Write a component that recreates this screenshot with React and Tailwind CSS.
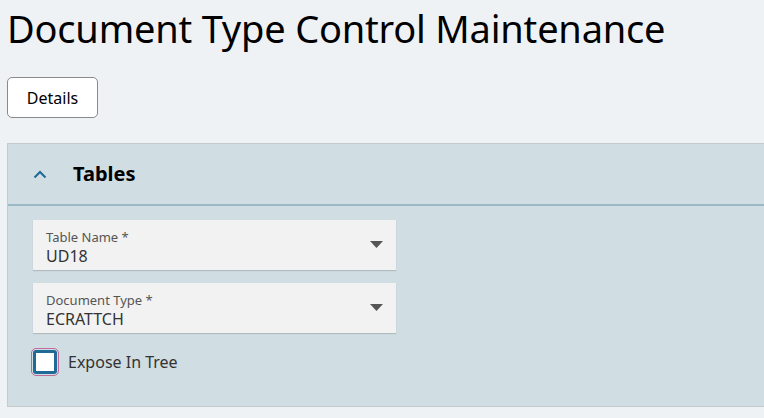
import React from 'react'

function Caret() {
  return (
    <svg width="13" height="8" viewBox="0 0 13 8" className="shrink-0">
      <path d="M0 0 L13 0 L6.5 7 Z" fill="#555" />
    </svg>
  )
}

function SelectField({ label, value }) {
  return (
    <div className="w-[363px] h-[50px] bg-[#f2f2f2] shadow-[0_1px_1px_rgba(0,0,0,0.15)] flex items-center pl-[13px] pr-[13px]">
      <div className="flex-1 flex flex-col leading-none pt-[5px]">
        <span className="text-[13px] text-[#555] mb-[4px]">{label} *</span>
        <span className="text-[16px] text-[#333]">{value}</span>
      </div>
      <Caret />
    </div>
  )
}

export default function App() {
  return (
    <div className="min-h-[418px] bg-[#eff2f5] font-['Noto_Sans',sans-serif] overflow-hidden">
      <h1 className="text-[38px] leading-none text-black pl-[7px] pt-[9px] tracking-[-0.2px] whitespace-nowrap">
        Document Type Control Maintenance
      </h1>
      <div className="pl-[7px] mt-[30px]">
        <button className="w-[91px] h-[41px] bg-white border border-[#8a8a8a] rounded-[5px] text-[16px] text-black">
          Details
        </button>
      </div>
      <section className="ml-[7px] mt-[25px] bg-[#d0dde2] border border-[#c5c9cc] border-r-0 h-[264px]">
        <div className="h-[62px] flex items-center border-b-2 border-[#9bb9c4] pl-[25px]">
          <svg width="14" height="9" viewBox="0 0 14 9" className="mr-[26px]">
            <path d="M1.5 7.5 L7 2 L12.5 7.5" fill="none" stroke="#1f6a96" strokeWidth="2" />
          </svg>
          <h2 className="text-[20px] font-bold text-black">Tables</h2>
        </div>
        <div className="pl-[25px] pt-[14px] flex flex-col gap-[13px]">
          <SelectField label="Table Name" value="UD18" />
          <SelectField label="Document Type" value="ECRATTCH" />
          <label className="flex items-center gap-[9px] mt-[2px]">
            <span className="w-[28px] h-[28px] -ml-[2px] rounded-[5px] border border-[#c06a99] flex items-center justify-center">
              <span className="w-[24px] h-[24px] rounded-[3px] border-[3px] border-[#1f6a96] bg-white" />
            </span>
            <span className="text-[16px] text-[#333]">Expose In Tree</span>
          </label>
        </div>
      </section>
    </div>
  )
}
